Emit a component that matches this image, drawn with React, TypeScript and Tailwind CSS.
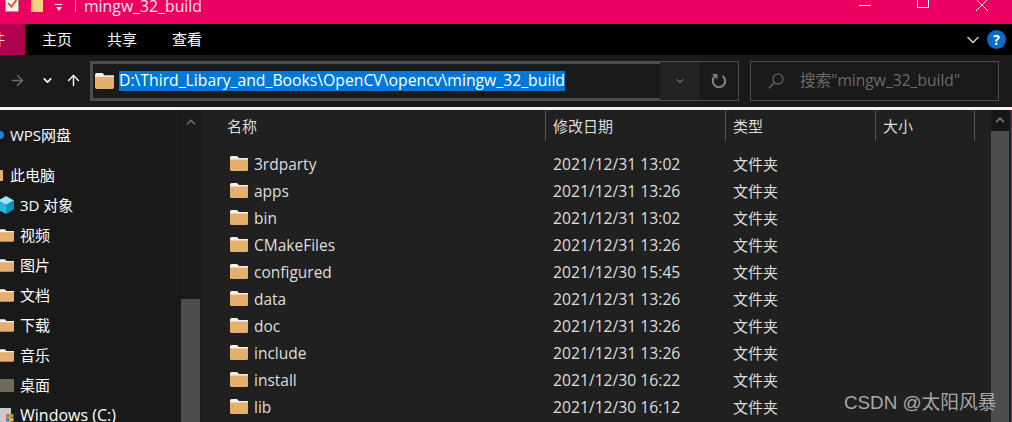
import { ArrowRight, ArrowUp, ChevronDown, ChevronUp } from 'lucide-react';

const FOLDERS = [
  { name: '3rdparty', date: '2021/12/31 13:02' },
  { name: 'apps', date: '2021/12/31 13:26' },
  { name: 'bin', date: '2021/12/31 13:02' },
  { name: 'CMakeFiles', date: '2021/12/31 13:26' },
  { name: 'configured', date: '2021/12/30 15:45' },
  { name: 'data', date: '2021/12/31 13:26' },
  { name: 'doc', date: '2021/12/31 13:26' },
  { name: 'include', date: '2021/12/31 13:26' },
  { name: 'install', date: '2021/12/30 16:22' },
  { name: 'lib', date: '2021/12/30 16:12' },
];

const PLACES = ['视频', '图片', '文档', '下载', '音乐'];

function Folder({ className }: { className?: string }) {
  return (
    <svg viewBox="0 0 18 15" className={className}>
      <path d="M0 1.5 Q0 0 1.5 0 H7 L9 2 H18 V5 H0 Z" fill="#f3f0e8" />
      <path d="M0 3.5 H18 V13.5 Q18 15 16.5 15 H1.5 Q0 15 0 13.5 Z" fill="#e5b06e" />
    </svg>
  );
}

function Cube() {
  return (
    <svg viewBox="0 0 16 18" className="-ml-[2px] w-[16px] h-[18px] shrink-0">
      <path d="M8 0 L16 4.5 L8 9 L0 4.5 Z" fill="#9be8f5" />
      <path d="M0 4.5 L8 9 V18 L0 13.5 Z" fill="#27b7dc" />
      <path d="M16 4.5 L8 9 V18 L16 13.5 Z" fill="#0f93bd" />
    </svg>
  );
}

function Drive() {
  return (
    <svg viewBox="0 0 14 14" className="w-[14px] h-[14px] shrink-0">
      <rect width="11" height="14" fill="#c9c9c9" />
      <rect x="6" y="6" width="3.5" height="3.5" fill="#e8632c" />
      <rect x="10" y="6" width="3.5" height="3.5" fill="#7fb52e" />
      <rect x="6" y="10" width="3.5" height="3.5" fill="#2f8fdc" />
      <rect x="10" y="10" width="3.5" height="3.5" fill="#f2b81e" />
    </svg>
  );
}

function Refresh() {
  return (
    <svg viewBox="0 0 16 16" className="w-[16px] h-[16px]">
      <path d="M11.5 2.8 A6.2 6.2 0 1 1 4.2 3" fill="none" stroke="#7c7c7c" strokeWidth="2.2" />
      <path d="M1 1 H6.5 V6.5 Z" fill="#7c7c7c" />
    </svg>
  );
}

function SearchGlass() {
  return (
    <svg viewBox="0 0 16 16" className="ml-[17px] w-[16px] h-[16px] shrink-0">
      <circle cx="10" cy="6" r="5" fill="none" stroke="#6f6f6f" strokeWidth="1.1" />
      <path d="M6.4 9.6 L0.8 15.4" stroke="#5f7488" strokeWidth="1.3" />
    </svg>
  );
}

export default function App() {
  return (
    <div className="relative w-[1012px] h-[422px] overflow-hidden flex flex-col bg-[#202020] text-white font-['Open_Sans','Noto_Sans_CJK_SC',sans-serif]">
      {/* title bar, cut off at the top */}
      <div className="h-[24px] shrink-0 bg-[#eb0062] overflow-hidden">
        <div className="h-[12px] flex items-center">
          <div className="ml-[5px] w-[14px] h-[30px] -mt-[18px] bg-[#f4f1ea] border border-[#999] flex items-end justify-center pb-[3px]">
            <svg viewBox="0 0 10 9" className="w-[11px] h-[10px] shrink-0">
              <path d="M1 4.5 L4 8 L9 1" fill="none" stroke="#e2501c" strokeWidth="1.6" />
            </svg>
          </div>
          <div className="ml-[12px] w-[12px] h-[28px] -mt-[16px] bg-[#f5d27e] border-l-2 border-l-[#e0b45e]" />
          <div className="ml-[12px] flex flex-col items-center gap-[2px] mt-[3px]">
            <div className="w-[7px] h-px bg-white" />
            <div className="w-0 h-0 border-x-[3.5px] border-x-transparent border-t-[4px] border-t-white" />
          </div>
          <div className="ml-[13px] w-px h-[15px] -mt-[4px] bg-[#f58ab5]" />
          <span className="ml-[8px] text-[15.8px] leading-[12px] text-[#fde4ee]">mingw_32_build</span>
          <div className="ml-auto w-[12px] h-px bg-white mt-[-1px]" />
          <div className="ml-[46px] w-[12px] h-[18px] -mt-[14px] border border-white" />
          <svg viewBox="0 0 12 12" className="ml-[47px] mr-[24px] w-[12px] h-[12px] -mt-[2px]">
            <path d="M0 0 L12 12 M12 0 L0 12" stroke="white" strokeWidth="1" />
          </svg>
        </div>
      </div>

      {/* ribbon tabs */}
      <div className="h-[31px] shrink-0 bg-black flex items-center text-[15px]">
        <div className="w-[25px] h-full bg-[#b0004e] flex items-center overflow-hidden">
          <span className="-ml-[10px] shrink-0">件</span>
        </div>
        <span className="ml-[17px]">主页</span>
        <span className="ml-[35px]">共享</span>
        <span className="ml-[35px]">查看</span>
        <ChevronDown className="ml-auto w-[20px] h-[20px] text-[#c8c8c8]" strokeWidth={2} />
        <div className="ml-[4px] mr-[6px] w-[19px] h-[19px] rounded-full bg-[#0a6cc9] flex items-center justify-center text-[14px] font-bold leading-none">?</div>
      </div>

      {/* address row */}
      <div className="h-[55px] shrink-0 bg-[#1a1a1a] flex items-center pb-[1px] border-b-[3px] border-b-[#f2f2f2]">
        <ArrowRight className="ml-[9px] w-[17px] h-[17px] text-[#6d6d6d]" strokeWidth={2} />
        <ChevronDown className="ml-[15px] w-[13px] h-[13px]" strokeWidth={3} />
        <ArrowUp className="ml-[11px] w-[17px] h-[17px]" strokeWidth={2} />
        <div className="ml-[8px] w-[649px] h-[40px] flex items-stretch border border-[#4d4d4d]">
          <div className="flex-1 flex items-center border-y-2 border-l-2 border-[#4d4d4d]">
            <Folder className="ml-[2px] w-[19px] h-[16px] shrink-0" />
            <span className="ml-[5px] h-[20px] flex items-center bg-[#0078d7] text-[15.75px] leading-none whitespace-nowrap">D:\Third_Libary_and_Books\OpenCV\opencv\mingw_32_build</span>
          </div>
          <div className="w-[39px] bg-[#232323] flex items-center justify-center">
            <ChevronDown className="w-[12px] h-[12px] text-[#cfcfcf]" strokeWidth={1.5} />
          </div>
          <div className="w-[39px] flex items-center justify-center">
            <Refresh />
          </div>
        </div>
        <div className="ml-[11px] w-[249px] h-[40px] flex items-center border border-[#4d4d4d] text-[#6b6b6b] text-[15.6px]">
          <SearchGlass />
          <span className="ml-[16px] whitespace-nowrap">搜索"mingw_32_build"</span>
        </div>
      </div>

      <div className="flex-1 min-h-0 flex">
        {/* navigation pane */}
        <div className="w-[203px] shrink-0 bg-[#191919] flex border-r-2 border-r-[#1f1f1f]">
          <div className="flex-1 min-w-0 flex flex-col text-[15px] overflow-hidden">
            <div className="mt-[14px] h-[22px] shrink-0 flex items-center">
              <div className="-ml-[4px] w-[8px] h-[8px] rounded-full bg-[#2b7fd8]" />
              <span className="ml-[6px]">WPS网盘</span>
            </div>
            <div className="mt-[14px] h-[30px] shrink-0 flex items-center">
              <div className="w-[3px] h-[11px] bg-[#e5b06e]" />
              <span className="ml-[7px]">此电脑</span>
            </div>
            <div className="h-[30px] shrink-0 flex items-center">
              <Cube />
              <span className="ml-[6px]">3D 对象</span>
            </div>
            {PLACES.map((place) => (
              <div key={place} className="h-[30px] shrink-0 flex items-center">
                <Folder className="-ml-[1px] w-[15px] h-[15px] shrink-0" />
                <span className="ml-[6px]">{place}</span>
              </div>
            ))}
            <div className="h-[30px] shrink-0 flex items-center">
              <div className="w-[14px] h-[13px] bg-[#6f6a5c]" />
              <span className="ml-[6px]">桌面</span>
            </div>
            <div className="h-[30px] shrink-0 flex items-center">
              <Drive />
              <span className="ml-[6px] text-[16px] whitespace-nowrap">Windows (C:)</span>
            </div>
          </div>
          <div className="w-[19px] mr-[1px] shrink-0 bg-[#1b1b1b] flex flex-col">
            <div className="h-[189px] flex justify-center pt-[5px]">
              <ChevronUp className="w-[14px] h-[14px] text-[#6a6a6a]" strokeWidth={3} />
            </div>
            <div className="flex-1 bg-[#4d4d4d]" />
          </div>
        </div>

        {/* file list */}
        <div className="flex-1 min-w-0 flex flex-col">
          <div className="h-[31px] shrink-0 flex text-[15px] text-[#dcdcdc]">
            <div className="w-[343px] pl-[24px] pt-[2px] flex items-center border-r border-r-[#555]">名称</div>
            <div className="w-[180px] pl-[7px] pt-[2px] flex items-center border-r border-r-[#555]">修改日期</div>
            <div className="w-[150px] pl-[7px] pt-[2px] flex items-center border-r border-r-[#555]">类型</div>
            <div className="w-[99px] pl-[7px] pt-[2px] flex items-center border-r border-r-[#555]">大小</div>
          </div>
          <div className="mt-[10px] flex flex-col">
            {FOLDERS.map((folder) => (
              <div key={folder.name} className="h-[27px] shrink-0 flex items-center text-[#dedede]">
                <Folder className="ml-[27px] -mt-[3px] w-[18px] h-[15px] shrink-0" />
                <span className="ml-[6px] w-[299px] text-[15.5px]">{folder.name}</span>
                <span className="w-[180px] text-[15.7px]">{folder.date}</span>
                <span className="text-[15px]">文件夹</span>
              </div>
            ))}
          </div>
        </div>

        {/* list scrollbar */}
        <div className="w-[21px] shrink-0 flex bg-[#202020]">
          <div className="w-[18px] flex flex-col">
            <div className="h-[21px] bg-[#171717] flex justify-center pt-[3px]">
              <ChevronUp className="w-[14px] h-[14px] text-[#777]" strokeWidth={3} />
            </div>
            <div className="flex-1 bg-[#4d4d4d]" />
          </div>
          <div className="ml-auto w-px bg-[#eb0062]" />
        </div>
      </div>

      {/* watermark */}
      <span className="absolute left-[844px] top-[391px] text-[18.8px] leading-[24px] text-[#a8a8a8] font-['Liberation_Sans','Noto_Sans_CJK_SC',sans-serif]">CSDN @太阳风暴</span>
    </div>
  );
}
